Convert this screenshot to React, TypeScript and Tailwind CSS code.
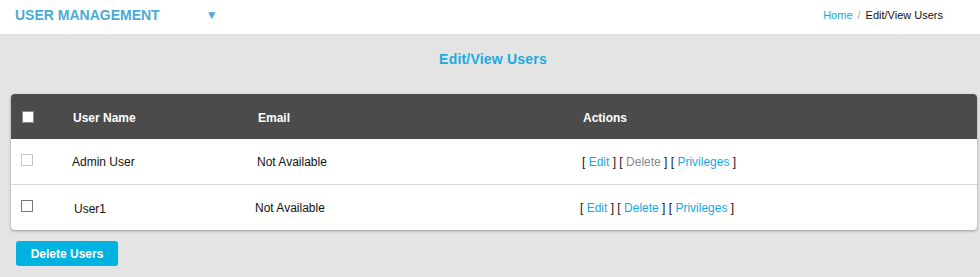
import { useState } from "react";

const users = [
  { id: 1, name: "Admin User", email: "Not Available", canDelete: false, nudge: ["ml-[-1px]", "ml-[-1px]", "ml-[-1px]"] },
  { id: 2, name: "User1", email: "Not Available", canDelete: true, nudge: ["ml-[1px]", "ml-[-3px]", "ml-[-3px]"] },
];

export default function App() {
  const [checked, setChecked] = useState<number[]>([]);

  const toggle = (id: number) =>
    setChecked((c) => (c.includes(id) ? c.filter((x) => x !== id) : [...c, id]));

  return (
    <div className="w-[980px] h-[277px] bg-[#e4e4e4] font-['Liberation_Sans',Arial,sans-serif] text-[12px] text-[#111]">
      {/* Top bar */}
      <div className="h-[34px] bg-white flex items-center justify-between pl-[15px] pr-[37px]">
        <div className="flex items-center">
          <span className="text-[14px] font-bold text-[#4aaad8] mt-[-4px]">USER MANAGEMENT</span>
          <span className="ml-[46px] mt-[-5px] text-[12px] text-[#4aaad8]">▼</span>
        </div>
        <div className="text-[11px] mt-[-4px]">
          <span className="text-[#1aa8dc]">Home</span>
          <span className="text-[#aaa] mx-[5px]">/</span>
          <span className="text-[#111]">Edit/View Users</span>
        </div>
      </div>

      {/* Title */}
      <div className="h-[50px] flex items-center justify-center pl-[6px]">
        <h2 className="text-[14px] font-bold text-[#1aace0] mt-[1px] tracking-[0.2px]">Edit/View Users</h2>
      </div>

      {/* Table card */}
      <div className="mx-[11px] mt-[10px] w-[966px] rounded-[4px] bg-white shadow-[0_1px_3px_rgba(0,0,0,0.35)] overflow-hidden">
        <div className="h-[45px] bg-[#4b4b4b] flex items-center text-white font-bold pt-[3px]">
          <div className="w-[62px] pl-[11px] pb-[2px]">
            <div className="w-[12px] h-[12px] bg-white border border-[#888]" />
          </div>
          <div className="w-[185px]">User Name</div>
          <div className="w-[325px]">Email</div>
          <div>Actions</div>
        </div>
        {users.map((u, i) => (
          <div
            key={u.id}
            className={`h-[45px] flex items-center ${i > 0 ? "border-t border-[#dcdcdc] h-[46px]" : ""}`}
          >
            <div className="w-[62px] pl-[10px] pb-[3px]">
              <button
                onClick={() => toggle(u.id)}
                className={`block w-[12px] h-[12px] bg-white border ${i === 0 ? "border-[#c4c4c4]" : "border-[#777]"}`}
              >
                {checked.includes(u.id) ? <span className="block w-full h-full bg-[#1aace0]" /> : null}
              </button>
            </div>
            <div className="w-[185px]">
              <span className={`${u.nudge[0]} ${i === 1 ? "inline-block mt-[2px]" : ""}`}>{u.name}</span>
            </div>
            <div className="w-[325px]">
              <span className={`inline-block ${u.nudge[1]}`}>{u.email}</span>
            </div>
            <div className={`${u.nudge[2]}`}>
              [ <a className="text-[#1aa8dc] cursor-pointer">Edit</a> ] [{" "}
              <a className={u.canDelete ? "text-[#1aa8dc] cursor-pointer" : "text-[#8a8a8a]"}>Delete</a> ] [{" "}
              <a className="text-[#1aa8dc] cursor-pointer">Privileges</a> ]
            </div>
          </div>
        ))}
      </div>

      {/* Footer */}
      <div className="pl-[16px] pt-[11px]">
        <button className="w-[102px] h-[25px] rounded-[3px] bg-[#00b2e0] text-white font-bold text-[12px]">
          Delete Users
        </button>
      </div>
    </div>
  );
}
